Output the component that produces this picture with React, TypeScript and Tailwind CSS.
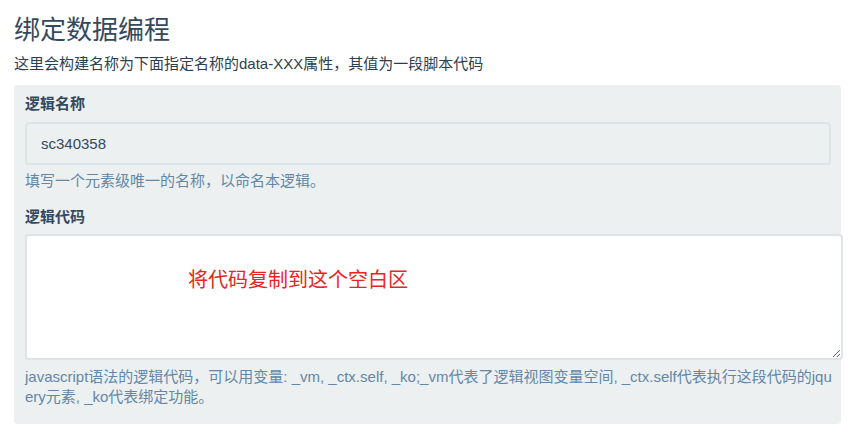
export default function App() {
  const font = { fontFamily: '"Liberation Sans", "Noto Sans CJK SC", sans-serif' };
  return (
    <div className="min-h-screen bg-white px-[14px] pt-3" style={font}>
      <h2 className="text-[26px] leading-[36px] font-normal text-[#34495e]">绑定数据编程</h2>
      <p className="mt-[6px] text-[15px] leading-5 text-[#2c3e50]">
        这里会构建名称为下面指定名称的data-XXX属性，其值为一段脚本代码
      </p>

      <div className="mt-[11px] w-[827px] rounded-[4px] bg-[#ecf0f1] pl-[11px] pr-[8px] pt-[9px] pb-[17px]">
        <label className="block text-[15px] leading-5 font-bold text-[#34495e]">逻辑名称</label>
        <input
          className="mt-2 block h-[43px] w-[806px] rounded-[4px] border-2 border-[#dde4e8] bg-[#ecf0f1] px-[14px] text-[15px] text-[#34495e] outline-none"
          defaultValue="sc340358"
        />
        <p className="mt-[6px] text-[15px] leading-5 text-[#6287a8]">填写一个元素级唯一的名称，以命名本逻辑。</p>

        <label className="mt-4 block text-[15px] leading-5 font-bold text-[#34495e]">逻辑代码</label>
        <div className="relative mt-[7px] w-[818px]">
          <textarea className="block h-[126px] w-full rounded-[4px] border-2 border-[#dde4e8] bg-white outline-none" />
          <span className="pointer-events-none absolute left-[163px] top-[34px] text-[20px] leading-6 text-[#e8251f]">
            将代码复制到这个空白区
          </span>
        </div>
        <p className="mt-[7px] break-all text-[15px] leading-5 text-[#6287a8]">
          javascript语法的逻辑代码，可以用变量: _vm, _ctx.self, _ko;_vm代表了逻辑视图变量空间, _ctx.self代表执行这段代码的jquery元素, _ko代表绑定功能。
        </p>
      </div>
    </div>
  );
}
